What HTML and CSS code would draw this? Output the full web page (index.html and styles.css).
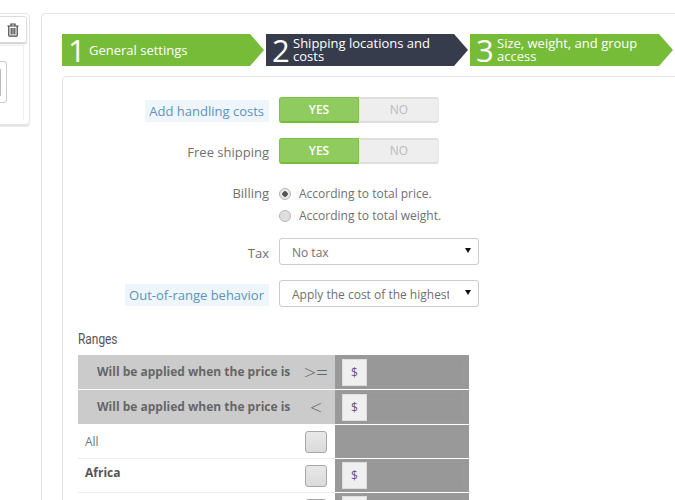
FILE: index.html
```html
<!DOCTYPE html>
<html lang="en">
<head>
  <meta charset="UTF-8" />
  <title>Shipping method</title>
  <link rel="stylesheet" href="styles.css">
</head>
<body>

<div class="page">
  <!-- LEFT: list card, cut off by the window -->
  <div class="side">
    <div class="side-card">
      <span class="trash-btn">
        <svg width="12" height="14" viewBox="0 0 12 14" fill="none" stroke="#444" stroke-width="1.2">
          <path d="M0.5 3h11M4 3V1h4v2"/>
          <path d="M1.8 3v9.2q0 1 1 1h6.400q1 0 1-1V3"/>
          <path d="M4.200 5v6.500M6 5v6.500M7.800 5v6.500"/>
        </svg>
      </span>
      <div class="side-body"><div class="side-box"><span class="side-inner"></span></div></div>
    </div>
  </div>

  <!-- RIGHT: wizard -->
  <div class="main">
    <div class="steps">
      <div class="step step-green step-1"><span class="num">1</span><span class="step-text">General settings</span></div>
      <div class="step step-dark step-2"><span class="num">2</span><span class="step-text">Shipping locations and costs</span></div>
      <div class="step step-green step-3"><span class="num">3</span><span class="step-text">Size, weight, and group access</span></div>
    </div>

    <div class="panel">
      <div class="row row-toggle">
        <span class="label"><span class="hint">Add handling costs</span></span>
        <div class="toggle"><span class="yes">YES</span><span class="no">NO</span></div>
      </div>
      <div class="row row-toggle">
        <span class="label">Free shipping</span>
        <div class="toggle"><span class="yes">YES</span><span class="no">NO</span></div>
      </div>
      <div class="row row-billing">
        <span class="label">Billing</span>
        <div class="radios">
          <div class="radio-line"><span class="radio radio-on"></span>According to total price.</div>
          <div class="radio-line"><span class="radio"></span>According to total weight.</div>
        </div>
      </div>
      <div class="row row-select">
        <span class="label">Tax</span>
        <div class="select"><span class="select-text">No tax</span><span class="arrow"></span></div>
      </div>
      <div class="row row-select">
        <span class="label"><span class="hint">Out-of-range behavior</span></span>
        <div class="select"><span class="select-text">Apply the cost of the highest range</span><span class="arrow"></span></div>
      </div>

      <h3 class="ranges-title">Ranges</h3>
      <div class="ranges">
        <div class="range-row range-head">
          <div class="range-name">Will be applied when the price is</div>
          <div class="range-sign">&gt;=</div>
          <div class="range-val"><span class="dollar">$</span><span class="amount"></span></div>
        </div>
        <div class="range-row range-head">
          <div class="range-name">Will be applied when the price is</div>
          <div class="range-sign">&lt;</div>
          <div class="range-val"><span class="dollar">$</span><span class="amount"></span></div>
        </div>
        <div class="range-row">
          <div class="range-name zone">All</div>
          <div class="range-sign"><span class="check"></span></div>
          <div class="range-val"></div>
        </div>
        <div class="range-row">
          <div class="range-name zone zone-bold">Africa</div>
          <div class="range-sign"><span class="check"></span></div>
          <div class="range-val"><span class="dollar">$</span><span class="amount"></span></div>
        </div>
        <div class="range-row">
          <div class="range-name zone"></div>
          <div class="range-sign"><span class="check"></span></div>
          <div class="range-val"><span class="dollar">$</span><span class="amount"></span></div>
        </div>
      </div>
    </div>
  </div>
</div>

</body>
</html>
```

FILE: styles.css
```css
html, body {
  margin: 0;
  height: 500px;
  overflow: hidden;
  background-color: #ffffff;
}
body {
  font-family: "Open Sans", Arial, sans-serif;
  font-size: 13px;
  color: #707070;
}
.page {
  display: flex;
  align-items: flex-start;
  padding-top: 13px;
  width: 900px;
}

/* LEFT CARD */
.side {
  width: 31px;
  height: 116px;
  margin-right: 10px;
  overflow: hidden;
  flex: none;
}
.side-card {
  margin-left: -30px;
  width: 60px;
  height: 112px;
  box-sizing: border-box;
  padding: 2px 2px 0 0;
  border: 1px solid #e4e4e4;
  border-radius: 4px;
  box-shadow: 0 2px 1px #e6e6e6;
}
.trash-btn {
  display: flex;
  align-items: center;
  justify-content: flex-end;
  height: 27px;
  box-sizing: border-box;
  padding-right: 7px;
  border: 1px solid #ddd;
  border-radius: 3px;
  box-shadow: 0 1px 1px #ccc;
}
.side-body {
  height: 75px;
  box-sizing: border-box;
  margin: 2px 3px 0 0;
  padding: 15px 16px 0 0;
  border-top: 1px solid #efefef;
  border-right: 1px solid #efefef;
}
.side-box {
  display: flex;
  align-items: center;
  justify-content: flex-end;
  height: 42px;
  box-sizing: border-box;
  padding-right: 5px;
  border: 1px solid #ccc;
  border-radius: 3px;
}
.side-inner {
  width: 10px;
  height: 27px;
  border: 1px solid #bbb;
  border-radius: 2px;
}

/* MAIN CARD */
.main {
  width: 800px;
  height: 600px;
  box-sizing: border-box;
  border: 1px solid #e4e4e4;
  border-radius: 4px;
  padding: 20px 20px;
  flex: none;
}

/* WIZARD STEPS */
.steps {
  display: flex;
  height: 32px;
  margin-bottom: 10px;
}
.step {
  display: flex;
  align-items: center;
  height: 32px;
  box-sizing: border-box;
  padding-left: 6px;
  color: #fff;
  flex: none;
  clip-path: polygon(0 0, calc(100% - 14px) 0, 100% 50%, calc(100% - 14px) 100%, 0 100%);
}
.step-green { background-color: #76bc39; }
.step-dark { background-color: #373c4d; }
.step-1 { width: 202px; margin-right: 2px; }
.step-2 { width: 202px; margin-right: 2px; }
.step-3 { width: 203px; }
.num {
  font-size: 31px;
  font-weight: 400;
  line-height: 32px;
  margin-right: 3px;
  width: 18px;
  flex: none;
}
.step-text {
  font-size: 13px;
  line-height: 13px;
  font-weight: 400;
  width: 165px;
}

/* INNER PANEL */
.panel {
  border: 1px solid #e4e4e4;
  border-radius: 4px;
  height: 500px;
  padding-top: 20px;
}
.row {
  display: flex;
  align-items: center;
}
.label {
  width: 206px;
  margin-right: 10px;
  padding-top: 2px;
  text-align: right;
  flex: none;
}
.hint {
  background-color: #eef6fb;
  color: #5a93bd;
  padding: 2px 5px 2px 4px;
}

.row-toggle {
  height: 26px;
  margin-bottom: 15px;
}
.toggle {
  display: flex;
  width: 160px;
  height: 26px;
  font-size: 12px;
  text-align: center;
}
.yes {
  width: 80px;
  box-sizing: border-box;
  background-color: #8fcb5e;
  border: 1px solid #7fc047;
  border-bottom: 2px solid #76bc39;
  border-radius: 3px 0 0 3px;
  color: #fff;
  font-weight: 600;
  line-height: 23px;
}
.no {
  width: 80px;
  box-sizing: border-box;
  background-color: #eeeeee;
  border: 1px solid #e6e6e6;
  border-top: 2px solid #dedede;
  border-bottom: 2px solid #dedede;
  border-radius: 0 3px 3px 0;
  color: #bbb;
  line-height: 21px;
}

.row-billing {
  align-items: flex-start;
  padding-top: 3px;
  margin-bottom: 12px;
}
.row-billing .label { padding-top: 2px; }
.radios { font-size: 12px; }
.radio-line {
  display: flex;
  align-items: center;
  height: 22px;
}
.radio {
  width: 12px;
  height: 12px;
  box-sizing: border-box;
  margin: 2px 8px 0 0;
  border: 1px solid #b4b4b4;
  border-radius: 50%;
  background-color: #dedede;
}
.radio-on {
  background: radial-gradient(circle, #555 0, #555 2.5px, #e8e8e8 3px);
}

.row-select {
  height: 27px;
  margin-bottom: 15px;
}
.select {
  display: flex;
  align-items: center;
  width: 200px;
  height: 27px;
  box-sizing: border-box;
  border: 1px solid #ccc;
  border-radius: 3px;
  font-size: 12px;
  padding: 0 7px 0 12px;
}
.select-text {
  width: 157px;
  flex: none;
  padding-top: 2px;
  overflow: hidden;
  white-space: nowrap;
}
.arrow {
  margin: -3px 0 0 auto;
  border-left: 3px solid transparent;
  border-right: 3px solid transparent;
  border-top: 5px solid #111;
}

/* RANGES TABLE */
.ranges-title {
  margin: 24px 0 8px 15px;
  font-family: "Roboto", Arial, sans-serif;
  font-size: 14px;
  font-weight: 400;
  color: #555;
  transform: scaleX(0.85);
  transform-origin: left;
}
.ranges {
  width: 391px;
  margin-left: 15px;
}
.range-row {
  display: flex;
  height: 34px;
}
.range-row > div {
  box-sizing: border-box;
  border-bottom: 1px solid #eeeeee;
}
.range-row .range-val {
  border-bottom-color: #fff;
}
.range-head {
  height: 35px;
  background-color: #cbcbcb;
}
.range-head > div {
  border-bottom-color: #fff;
}
.range-name {
  width: 213px;
  padding-left: 19px;
  line-height: 34px;
  font-size: 12px;
  font-weight: 700;
  color: #666;
  flex: none;
}
.range-row .zone {
  padding-left: 7px;
  font-weight: 400;
  color: #777;
}
.range-row .zone-bold {
  line-height: 28px;
  font-weight: 700;
  color: #555;
}
.range-sign {
  width: 44px;
  box-sizing: border-box;
  padding-left: 6px;
  flex: none;
  display: flex;
  align-items: center;
  justify-content: center;
  font-size: 21px;
  font-weight: 300;
  color: #666;
}
.check {
  width: 22px;
  height: 22px;
  box-sizing: border-box;
  border: 1px solid #a8a8a8;
  border-radius: 3px;
  background: linear-gradient(#e8e8e8, #dadada);
}
.range-val {
  flex: 1;
  display: flex;
  align-items: center;
  padding-left: 7px;
  background-color: #999999;
}
.dollar {
  width: 25px;
  height: 27px;
  box-sizing: border-box;
  border: 1px solid #dedede;
  line-height: 25px;
  text-align: center;
  background-color: #efefef;
  color: #6d4f7c;
  font-size: 12px;
}
.amount {
  width: 94px;
  height: 25px;
  box-sizing: border-box;
  border: 1px solid #969696;
  background-color: #989898;
}
```
